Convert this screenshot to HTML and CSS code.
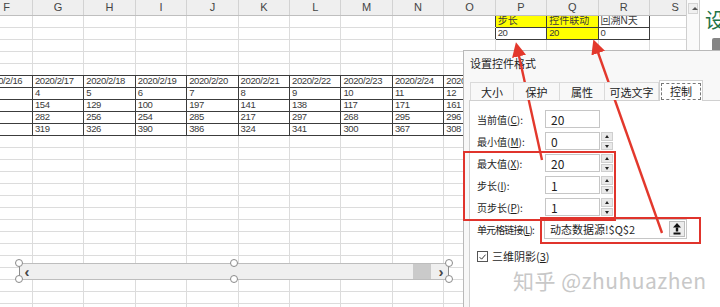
FILE: index.html
```html
<!DOCTYPE html>
<html lang="zh-CN">
<head>
    <meta charset="UTF-8">
    <title>设置控件格式</title>
    <link rel="stylesheet" href="styles.css">
</head>
<body>
    <div class="window">
        <div class="sheet">
            <table class="grid">
                <thead>
                    <tr id="colHeads"></tr>
                </thead>
                <tbody id="rows">
                    <!-- rows are built by the script below -->
                </tbody>
            </table>

            <!-- form control: horizontal scroll bar, selected -->
            <div class="hbar">
                <span class="hbar-arrow">&lsaquo;</span>
                <span class="hbar-thumb"></span>
                <span class="hbar-arrow">&rsaquo;</span>
            </div>
            <span class="handle h-tl"></span>
            <span class="handle h-bl"></span>
            <span class="handle h-tm"></span>
            <span class="handle h-bm"></span>
            <span class="handle h-tr"></span>
            <span class="handle h-br"></span>
        </div>
        <div class="vscroll">
            <div class="vscroll-btn"></div>
        </div>
        <div class="pane">
            <span class="pane-title">设</span>
            <div class="pane-btn"></div>
        </div>
    </div>

    <div class="dialog">
        <div class="dlg-title">设置控件格式</div>
        <div class="tabs">
            <span class="tab t1">大小</span>
            <span class="tab t2">保护</span>
            <span class="tab t3">属性</span>
            <span class="tab t4">可选文字</span>
            <span class="tab t5 active"><span class="focus">控制</span></span>
        </div>
        <div class="panel">
            <div class="form">
                <label>当前值(<u>C</u>):</label>
                <div class="field">20</div>
                <span></span>

                <label>最小值(<u>M</u>):</label>
                <div class="field">0</div>
                <div class="spin"><i class="up"></i><i class="down"></i></div>

                <label>最大值(<u>X</u>):</label>
                <div class="field">20</div>
                <div class="spin"><i class="up"></i><i class="down"></i></div>

                <label>步长(<u>I</u>):</label>
                <div class="field">1</div>
                <div class="spin"><i class="up"></i><i class="down"></i></div>

                <label>页步长(<u>P</u>):</label>
                <div class="field">1</div>
                <div class="spin"><i class="up"></i><i class="down"></i></div>
            </div>

            <div class="link-row">
                <label>单元格链接(<u>L</u>):</label>
                <div class="ref">
                    <span>动态数据源!$Q$2</span>
                    <span class="ref-btn">
                        <svg width="8" height="12" viewBox="0 0 8 12">
                            <polygon points="0,4.5 4,0 8,4.5" fill="#111"/>
                            <rect x="2.8" y="4.5" width="2.4" height="4" fill="#111"/>
                            <rect x="0.5" y="9.5" width="7" height="2" fill="#111"/>
                        </svg>
                    </span>
                </div>
            </div>

            <div class="check-row">
                <span class="checkbox">
                    <svg width="10" height="10" viewBox="0 0 10 10">
                        <polyline points="1.8,5.2 4,7.4 8.4,2.4" fill="none" stroke="#333" stroke-width="1.1"/>
                    </svg>
                </span>
                <span>三维阴影(<u>3</u>)</span>
            </div>
        </div>
        <div class="watermark">知乎 @zhuhuazhen</div>
    </div>

    <!-- red annotations drawn over the screen -->
    <svg class="marks" width="720" height="307" viewBox="0 0 720 307">
        <defs>
            <marker id="head" markerWidth="6" markerHeight="6" refX="4" refY="3" orient="auto" markerUnits="strokeWidth">
                <polygon points="0,0 6,3 0,6" fill="#e3382c"/>
            </marker>
        </defs>
        <line x1="542" y1="160" x2="517" y2="47" stroke="#e3382c" stroke-width="2.4" marker-end="url(#head)"/>
        <line x1="662" y1="233" x2="595" y2="44" stroke="#e3382c" stroke-width="2.4" marker-end="url(#head)"/>
        <rect x="464" y="152" width="151" height="68" fill="none" stroke="#e0342c" stroke-width="2"/>
        <rect x="541" y="218" width="159" height="25" fill="none" stroke="#e0342c" stroke-width="2"/>
    </svg>

    <script>
        const cols = ['F', 'G', 'H', 'I', 'J', 'K', 'L', 'M', 'N', 'O', 'P', 'Q', 'R', 'S'];

        const sheet = [
            ['', '', '', '', '', '', '', '', '', '', '步长', '控件联动', '回溯N天'],
            ['', '', '', '', '', '', '', '', '', '', '20', '20', '0'],
            [],
            [],
            [],
            ['2020/2/16', '2020/2/17', '2020/2/18', '2020/2/19', '2020/2/20', '2020/2/21', '2020/2/22', '2020/2/23', '2020/2/24', '2020/2/25'],
            ['', '4', '5', '6', '7', '8', '9', '10', '11', '12'],
            ['', '154', '129', '100', '197', '141', '138', '117', '171', '161'],
            ['', '282', '256', '254', '285', '217', '297', '268', '295', '296'],
            ['', '319', '326', '390', '386', '324', '341', '300', '367', '308']
        ];
        const totalRows = 25;
        const yellow = ['0,10', '0,11', '1,11'];

        // cells with the dark outline
        function isBox(r, c) {
            if (r <= 1 && c >= 10 && c <= 12) return true;
            if (r >= 5 && r <= 9 && c <= 10) return true;
            return false;
        }

        const head = document.getElementById('colHeads');
        cols.forEach(name => {
            const th = document.createElement('th');
            th.textContent = name;
            head.appendChild(th);
        });

        const tbody = document.getElementById('rows');
        for (let r = 0; r < totalRows; r++) {
            const tr = document.createElement('tr');
            const values = sheet[r] || [];
            cols.forEach((name, c) => {
                const td = document.createElement('td');
                const text = values[c] || '';
                td.textContent = text;
                if (/[\u4e00-\u9fff]/.test(text)) td.classList.add('cjk');
                if (yellow.includes(r + ',' + c)) td.classList.add('fill');
                if (isBox(r, c)) td.classList.add('box');
                if (!isBox(r, c) && isBox(r + 1, c)) td.style.borderBottomColor = '#3c3c3c';
                if (!isBox(r, c) && isBox(r, c + 1)) td.style.borderRightColor = '#3c3c3c';
                tr.appendChild(td);
            });
            tbody.appendChild(tr);
        }
    </script>
</body>
</html>
```

FILE: styles.css
```css
* {
    box-sizing: border-box;
}
html, body {
    margin: 0;
    width: 720px;
    height: 307px;
    overflow: hidden;
    background: #fff;
}
body {
    position: relative;
    font-family: "Liberation Sans", "Noto Sans CJK SC", sans-serif;
    color: #222;
}
.window {
    display: flex;
    height: 307px;
}
.sheet {
    position: relative;
    width: 686px;
    flex: none;
    overflow: hidden;
}
.grid {
    border-collapse: collapse;
    table-layout: fixed;
    width: 721px;
    margin-left: -19.5px;
    font-size: 10px;
}
.grid th {
    height: 15px;
    padding: 0;
    font-weight: normal;
    font-size: 11px;
    color: #444;
    background: #efefef;
    border: 1px solid #d2d2d2;
    border-top: none;
    border-bottom-color: #bfbfbf;
}
.grid tr {
    height: 12px;
}
.grid td {
    height: 12px;
    padding: 0 0 0 2px;
    line-height: 10px;
    white-space: nowrap;
    overflow: hidden;
    color: #3a3a3a;
    border: 1px solid #dcdcdc;
    font-family: "Liberation Sans", "Noto Sans CJK SC", sans-serif;
    font-size: 9.5px;
    letter-spacing: -0.4px;
}
.grid td.cjk {
    font-size: 10px;
    letter-spacing: 0;
}
.grid td.box {
    border-color: #3c3c3c;
}
.grid td.fill {
    background: #ffff00;
}

/* selected scroll bar control */
.hbar {
    position: absolute;
    left: 19px;
    top: 263px;
    width: 430px;
    height: 17px;
    display: flex;
    align-items: center;
    background: #efefef;
    border: 1px solid #bdbdbd;
    border-left-color: #8c8c8c;
    border-right-color: #8c8c8c;
}
.hbar-arrow {
    width: 14px;
    text-align: center;
    font-size: 15px;
    font-weight: bold;
    line-height: 15px;
    color: #444;
}
.hbar-thumb {
    margin-left: auto;
    width: 18px;
    height: 15px;
    margin-right: 3px;
    background: #cacaca;
}
.handle {
    position: absolute;
    width: 8px;
    height: 8px;
    border: 1px solid #8a8a8a;
    border-radius: 50%;
    background: #fff;
}
.h-tl { left: 15px; top: 259px; }
.h-bl { left: 15px; top: 275px; }
.h-tm { left: 230px; top: 259px; }
.h-bm { left: 230px; top: 275px; }
.h-tr { left: 445px; top: 259px; }
.h-br { left: 445px; top: 275px; }

.vscroll {
    width: 14px;
    flex: none;
    background: #fafafa;
    border-left: 1px solid #cfcfcf;
    border-right: 1px solid #cfcfcf;
    padding: 3px 1px 0;
}
.vscroll-btn {
    height: 11px;
    background: #f0f0f0;
    border: 1px solid #d4d4d4;
    position: relative;
}
.vscroll-btn::after {
    content: "";
    position: absolute;
    left: 3px;
    top: 3px;
    border-left: 3px solid transparent;
    border-right: 3px solid transparent;
    border-bottom: 3px solid #555;
}
.pane {
    flex: 1;
    padding: 8px 0 0 5px;
    overflow: hidden;
}
.pane-title {
    display: block;
    font-family: "Noto Sans CJK SC", sans-serif;
    font-size: 20px;
    line-height: 24px;
    color: #217346;
}
.pane-btn {
    margin: 6px 0 0 7px;
    height: 14px;
    background: #858585;
    border-radius: 2px 0 0 0;
}

/* format control dialog */
.dialog {
    position: absolute;
    left: 463px;
    top: 50px;
    width: 300px;
    height: 300px;
    padding-left: 5px;
    background: #f8f8f8;
    border-left: 1px solid #b9b9b9;
    border-top: 1px solid #b9b9b9;
    font-family: "Noto Sans CJK SC", sans-serif;
    font-size: 11px;
    color: #1e1e1e;
}
.dlg-title {
    height: 31px;
    padding: 4px 0 0 1px;
    line-height: 16px;
}
.tabs {
    display: flex;
    height: 18px;
    margin-left: 1px;
    position: relative;
    z-index: 1;
}
.tab {
    display: flex;
    align-items: center;
    justify-content: center;
    height: 18px;
    border: 1px solid #dadada;
    border-bottom: none;
    border-left: none;
    background: #f8f8f8;
    color: #222;
}
.t1 { width: 44px; border-left: 1px solid #dadada; }
.t2 { width: 46px; }
.t3 { width: 45px; }
.t4 { width: 54px; }
.t5 { width: 44px; }
.tab.active {
    height: 21px;
    margin-top: -2px;
    background: #fff;
    border: 1px solid #d0d0d0;
    border-bottom: none;
}
.focus {
    display: flex;
    align-items: center;
    justify-content: center;
    width: 40px;
    height: 17px;
    border: 1px dashed #777;
}
.panel {
    height: 220px;
    padding: 9px 0 0 7px;
    background: #fff;
    border: 1px solid #d0d0d0;
    font-size: 10px;
}
.form {
    display: grid;
    grid-template-columns: 68px 55px 13px;
    grid-auto-rows: 18px;
    row-gap: 4px;
}
.form label,
.link-row label {
    display: flex;
    align-items: center;
    white-space: nowrap;
}
.field {
    display: flex;
    align-items: center;
    padding-left: 5px;
    border: 1px solid #c6c6c6;
    background: #fff;
    font-size: 12px;
}
.spin {
    display: flex;
    flex-direction: column;
    gap: 1px;
    padding: 0 0 0 1px;
}
.spin i {
    flex: 1;
    background: #e9e9e9;
    border: 1px solid #cfcfcf;
    position: relative;
}
.spin i::after {
    content: "";
    position: absolute;
    left: 3px;
    top: 2px;
    border-left: 2.5px solid transparent;
    border-right: 2.5px solid transparent;
}
.spin .up::after {
    border-bottom: 3px solid #222;
}
.spin .down::after {
    border-top: 3px solid #222;
}
.link-row {
    display: flex;
    height: 20px;
    margin-top: 3px;
}
.link-row label {
    width: 67px;
    flex: none;
    letter-spacing: -0.9px;
}
.ref {
    width: 143px;
    display: flex;
    align-items: center;
    padding: 0 1px 0 5px;
    border: 1px solid #c6c6c6;
    font-size: 11px;
}
.ref-btn {
    margin-left: auto;
    width: 16px;
    height: 16px;
    display: flex;
    align-items: center;
    justify-content: center;
    background: #ececec;
    border: 1px solid #bcbcbc;
}
.check-row {
    display: flex;
    align-items: center;
    gap: 4px;
    margin-top: 11px;
    height: 12px;
    font-size: 11px;
}
.checkbox {
    width: 11px;
    height: 11px;
    border: 1px solid #555;
    display: flex;
}
.watermark {
    position: absolute;
    left: 49px;
    top: 214px;
    font-family: "Noto Sans CJK SC", sans-serif;
    font-size: 21px;
    letter-spacing: 0.5px;
    color: #c8c8c8;
    white-space: nowrap;
}
.marks {
    position: absolute;
    left: 0;
    top: 0;
    pointer-events: none;
}
```
